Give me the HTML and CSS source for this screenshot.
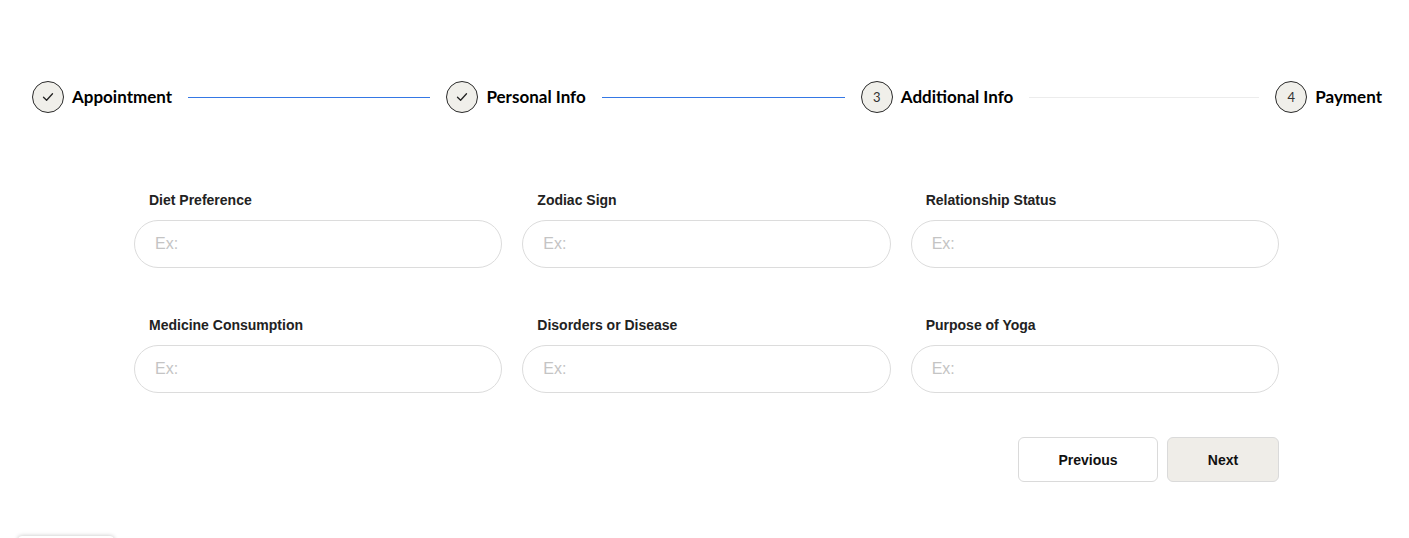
FILE: index.html
```html
<!DOCTYPE html>
<html lang="en">
<head>
<meta charset="utf-8">
<title>Booking – Additional Info</title>
<link rel="stylesheet" href="styles.css">
</head>
<body>
<div class="page">
  <div class="stepper">
    <div class="step">
      <span class="circle"><svg width="14" height="14" viewBox="0 0 14 14"><path d="M2.5 7.2 L5.6 10.2 L11.5 3.8" fill="none" stroke="#222" stroke-width="1.3" stroke-linecap="round" stroke-linejoin="round"/></svg></span>
      <span class="title">Appointment</span>
      <span class="line active"></span>
    </div>
    <div class="step">
      <span class="circle"><svg width="14" height="14" viewBox="0 0 14 14"><path d="M2.5 7.2 L5.6 10.2 L11.5 3.8" fill="none" stroke="#222" stroke-width="1.3" stroke-linecap="round" stroke-linejoin="round"/></svg></span>
      <span class="title">Personal Info</span>
      <span class="line active"></span>
    </div>
    <div class="step">
      <span class="circle">3</span>
      <span class="title">Additional Info</span>
      <span class="line"></span>
    </div>
    <div class="step last">
      <span class="circle">4</span>
      <span class="title">Payment</span>
    </div>
  </div>

  <form class="form">
    <div class="grid">
      <div class="field"><label class="label">Diet Preference</label><input class="input" type="text" placeholder="Ex:"></div>
      <div class="field"><label class="label">Zodiac Sign</label><input class="input" type="text" placeholder="Ex:"></div>
      <div class="field"><label class="label">Relationship Status</label><input class="input" type="text" placeholder="Ex:"></div>
      <div class="field"><label class="label">Medicine Consumption</label><input class="input" type="text" placeholder="Ex:"></div>
      <div class="field"><label class="label">Disorders or Disease</label><input class="input" type="text" placeholder="Ex:"></div>
      <div class="field"><label class="label">Purpose of Yoga</label><input class="input" type="text" placeholder="Ex:"></div>
    </div>
    <div class="actions">
      <button type="button" class="btn btn-prev">Previous</button>
      <button type="button" class="btn btn-next">Next</button>
    </div>
  </form>

  <div class="widget"></div>
</div>
</body>
</html>
```

FILE: styles.css
```css
* { box-sizing: border-box; }
html, body { margin: 0; padding: 0; background: #fff; }
body { font-family: "Liberation Sans", Arial, sans-serif; color: #222; overflow: hidden; }

.page { width: 1409px; height: 538px; position: relative; overflow: hidden; }

.stepper {
  display: flex;
  align-items: center;
  padding: 81px 27px 0 32px;
}
.step { display: flex; align-items: center; flex: 1 1 0; min-width: 0; }
.step.last { flex: 0 0 auto; }
.circle {
  width: 32px; height: 32px;
  border: 1px solid #2a2a2a;
  border-radius: 50%;
  background: #f0efea;
  display: flex; align-items: center; justify-content: center;
  font-family: Lato, "DejaVu Sans", sans-serif;
  font-size: 13px;
  color: #333;
  flex: 0 0 auto;
}
.title {
  margin-left: 8px;
  font-family: Lato, "Open Sans", sans-serif;
  font-weight: 700;
  font-size: 17px;
  line-height: 20px;
  color: #000;
  white-space: nowrap;
}
.line { flex: 1; height: 1px; margin: 0 16px; background: #ececec; }
.line.active { background: #3578e5; }

.form { width: 1145px; margin: 79px 0 0 134px; }
.grid {
  display: grid;
  grid-template-columns: repeat(3, 1fr);
  column-gap: 20px;
  row-gap: 49px;
}
.field { display: flex; flex-direction: column; }
.label {
  font-size: 14px;
  line-height: 17px;
  font-weight: 700;
  color: #222;
  padding-left: 15px;
  margin-bottom: 11px;
}
.input {
  height: 48px;
  border: 1px solid #dcdcdc;
  border-radius: 24px;
  padding: 0 20px;
  font-family: "Liberation Sans", Arial, sans-serif;
  font-size: 16px;
  color: #333;
  background: #fff;
  outline: none;
}
.input::placeholder { color: #c4c4c4; }

.actions {
  display: flex;
  justify-content: flex-end;
  gap: 9px;
  margin-top: 44px;
}
.btn {
  height: 45px;
  border: 1px solid #dadada;
  border-radius: 6px;
  font-family: "Liberation Sans", Arial, sans-serif;
  font-weight: 700;
  font-size: 14px;
  color: #111;
  cursor: pointer;
}
.btn-prev { width: 140px; background: #fff; }
.btn-next { width: 112px; background: #efede8; }

.widget {
  position: absolute;
  left: 18px; top: 536px;
  width: 96px; height: 40px;
  background: #fff;
  border-radius: 4px;
  box-shadow: 0 0 4px rgba(0,0,0,0.25);
}
```
